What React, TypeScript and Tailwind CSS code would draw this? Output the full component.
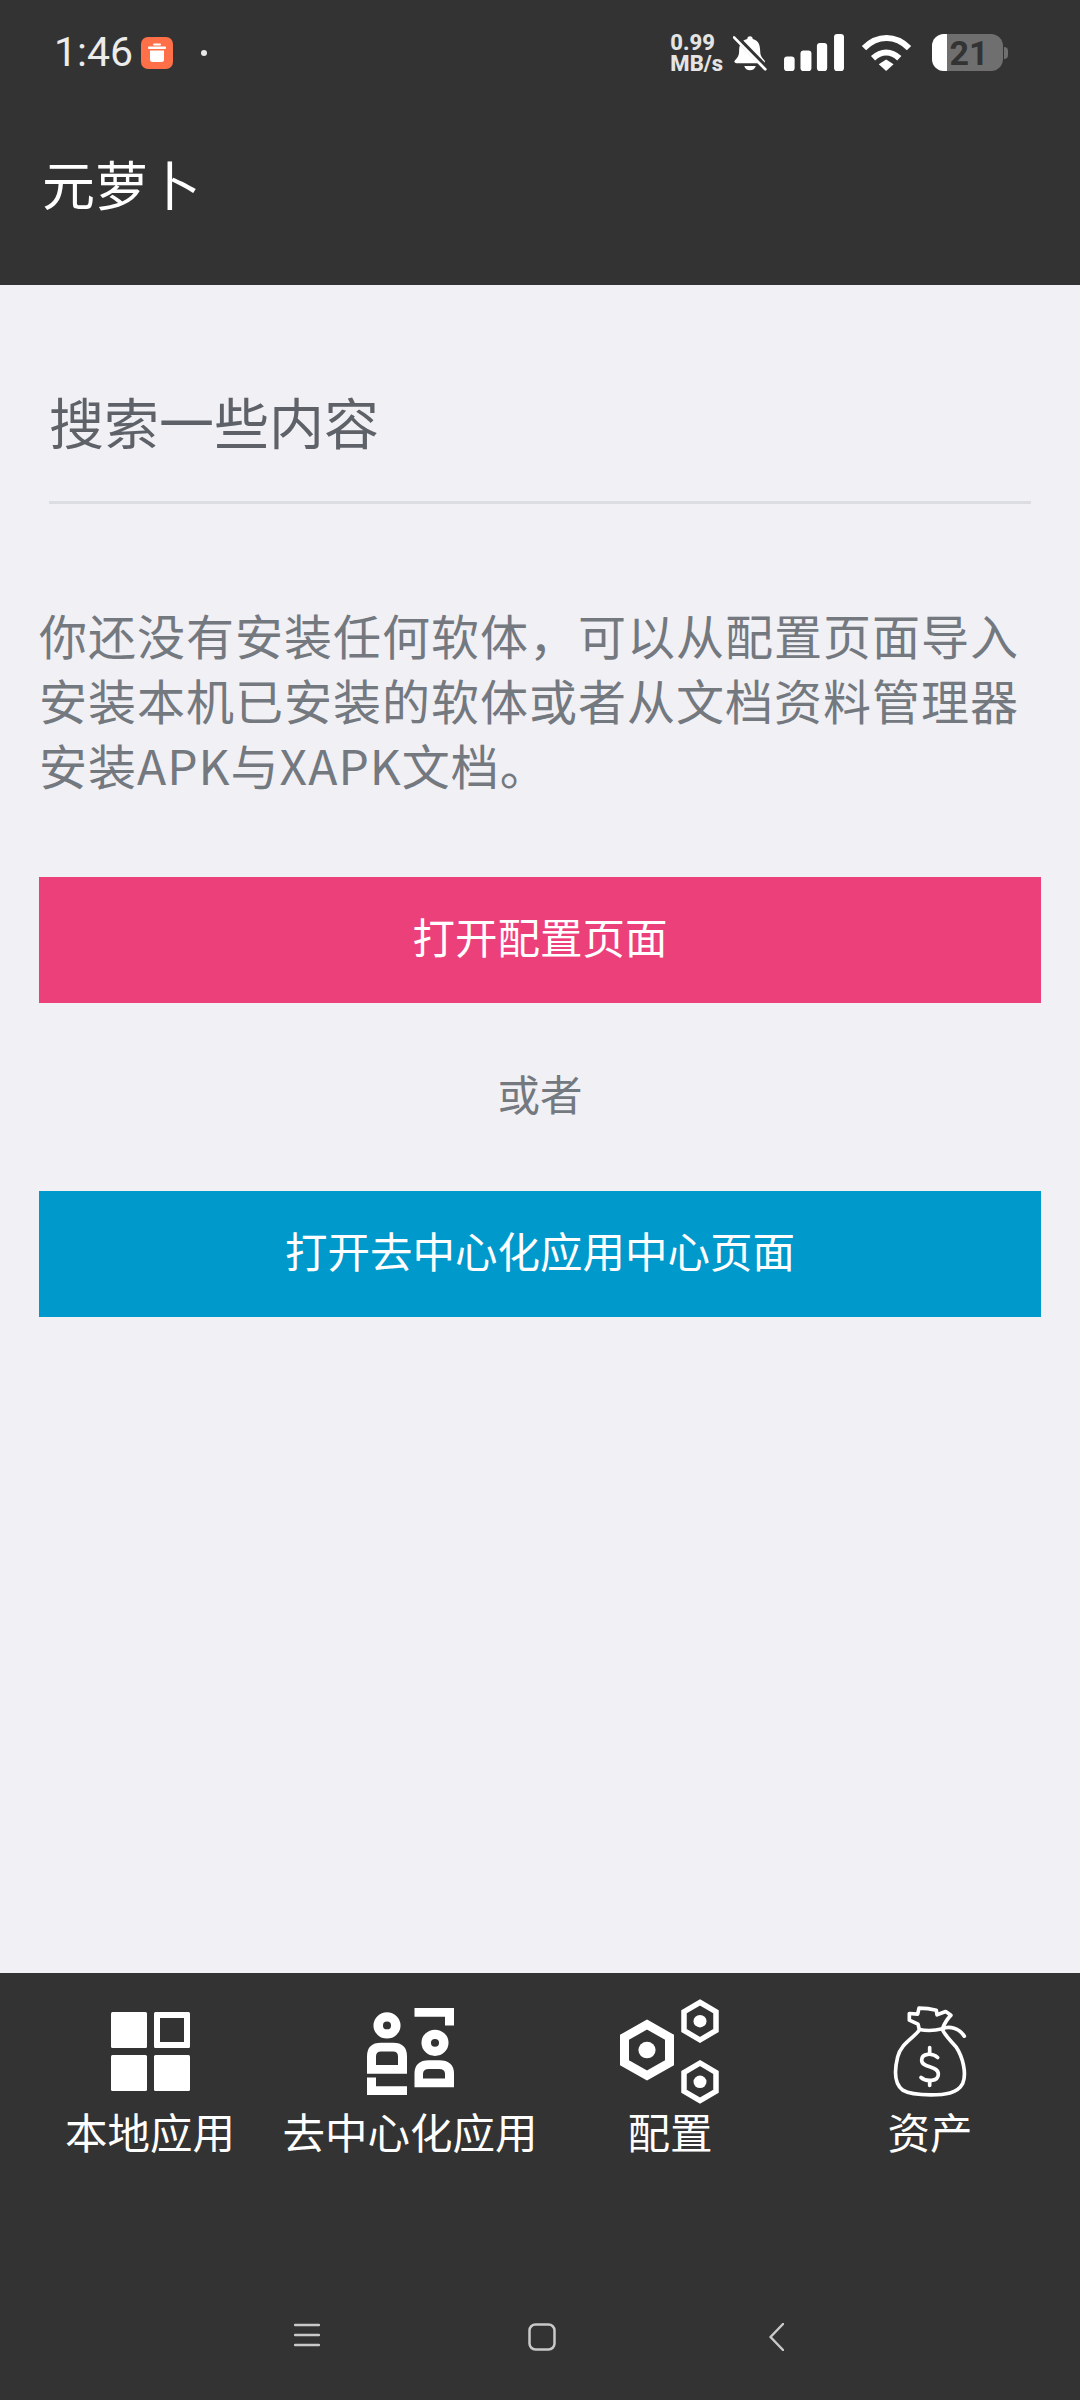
const CJK = "font-['Noto_Sans_CJK_SC','Noto_Sans',sans-serif]";

function hexPoints(cx: number, cy: number, w: number, h: number) {
  return [
    [cx, cy - h],
    [cx + w, cy - h / 2],
    [cx + w, cy + h / 2],
    [cx, cy + h],
    [cx - w, cy + h / 2],
    [cx - w, cy - h / 2],
  ]
    .map((p) => p.join(","))
    .join(" ");
}

function TrashBadge() {
  return (
    <span className="ml-[8px] flex h-8 w-8 items-center justify-center rounded-[7px] bg-[#ff7049]">
      <svg width="20" height="20" viewBox="0 0 20 20" fill="white">
        <rect x="6" y="0.5" width="8" height="2" rx="1" />
        <rect x="1" y="3.5" width="18" height="2.5" rx="1" />
        <path d="M3 7.5h14v9a2.5 2.5 0 0 1-2.5 2.5h-9A2.5 2.5 0 0 1 3 16.5z" />
      </svg>
    </span>
  );
}

function MutedBell() {
  return (
    <svg width="34" height="36" viewBox="285 100 100 106">
      <path
        fill="#fff"
        d="M335 104c5 0 8 3 8 8 18 4 22 20 22 36 0 12 4 18 12 26 4 4 2 9-3 9H295c-6 0-8-5-4-9 8-8 12-14 12-26 0-16 4-32 24-36 0-5 3-8 8-8zM318 191h34c-2 8-9 13-17 13s-15-5-17-13z"
      />
      <path d="M280 92l100 102" stroke="#333" strokeWidth="16" />
      <path d="M288 107l92 94" stroke="#fff" strokeWidth="8" strokeLinecap="round" />
    </svg>
  );
}

function SignalBars() {
  return (
    <svg width="60" height="37" viewBox="437 99 175 108" fill="#fff">
      <rect x="437" y="165" width="31" height="42" rx="9" />
      <rect x="485" y="147" width="32" height="60" rx="9" />
      <rect x="533" y="125" width="30" height="82" rx="9" />
      <rect x="583" y="99" width="29" height="108" rx="9" />
    </svg>
  );
}

function Wifi() {
  return (
    <svg width="51" height="37" viewBox="668 98 150 110" fill="none" stroke="#fff">
      <path d="M676 140c40-40 94-40 134 0" strokeWidth="18" />
      <path d="M703 170c24-23 54-23 78 0" strokeWidth="18" />
      <path d="M720 188l22-14 22 14-22 20z" fill="#fff" stroke="none" />
    </svg>
  );
}

function Battery() {
  return (
    <div className="flex items-center">
      <div className="relative flex h-[37px] w-[71px] items-center justify-center overflow-hidden rounded-[12px] bg-[#6f6f6f]">
        <div className="absolute inset-y-0 left-0 w-[15px] bg-white" />
        <span className="relative pl-[3px] font-['Roboto',sans-serif] text-[34px] leading-none font-bold text-[#333]">21</span>
      </div>
      <div className="ml-[1px] h-[12px] w-[4px] rounded-r-full bg-[#6f6f6f]" />
    </div>
  );
}

function StatusBar() {
  return (
    <div className="flex h-[104px] items-center pt-[1px] pr-[72px] pl-[54px] text-white">
      <span className="font-['Roboto',sans-serif] text-[41px] leading-none text-[#ececec]">1:46</span>
      <TrashBadge />
      <span className="ml-[28px] h-[6px] w-[6px] rounded-full bg-[#e8e8e8]" />
      <div className="ml-auto flex items-center">
        <div className="flex flex-col font-['Roboto',sans-serif] text-[22px] leading-[21px] font-extrabold text-[#e4e4e4]">
          <span>0.99</span>
          <span>MB/s</span>
        </div>
        <div className="ml-[10px]">
          <MutedBell />
        </div>
        <div className="ml-[17px]">
          <SignalBars />
        </div>
        <div className="ml-[17px]">
          <Wifi />
        </div>
        <div className="ml-[20px]">
          <Battery />
        </div>
      </div>
    </div>
  );
}

function GridIcon() {
  return (
    <svg width="79" height="79" viewBox="0 0 79 79" fill="#fff">
      <rect width="36" height="36" rx="1.5" />
      <path fillRule="evenodd" d="M43 1.5A1.5 1.5 0 0 1 44.500 0h33A1.500 1.500 0 0 1 79 1.500v33a1.500 1.500 0 0 1-1.500 1.500h-33A1.500 1.500 0 0 1 43 34.500zM49 6v24h24V6z" />
      <rect y="43" width="36" height="36" rx="1.500" />
      <rect x="43" y="43" width="36" height="36" rx="1.500" />
    </svg>
  );
}

function PeopleIcon() {
  return (
    <svg width="87" height="87" viewBox="0 0 87 90" preserveAspectRatio="none" fill="#fff">
      <circle cx="20" cy="18" r="8.800" fill="none" stroke="#fff" strokeWidth="9.500" />
      <circle cx="68" cy="36" r="8.800" fill="none" stroke="#fff" strokeWidth="9.500" />
      <path fillRule="evenodd" d="M0 68V50Q0 36 14 36H26Q40 36 40 50V68zM9 59H31V50Q31 45 26 45H14Q9 45 9 50z" />
      <path fillRule="evenodd" d="M47.500 82V68Q47.500 54 62 54H72Q87 54 87 68V82zM56 73H78V68Q78 63 72 63H62Q56 63 56 68z" />
      <path d="M0 72V90H40V81H9V72z" />
      <path d="M47.500 0H87V18H78V9H47.500z" />
    </svg>
  );
}

function HexIcon() {
  return (
    <svg width="100" height="105" viewBox="0 0 100 109" preserveAspectRatio="none" fill="#fff">
      <g fill="none" stroke="#fff">
        <polygon points={hexPoints(27, 53, 22.500, 26.500)} strokeWidth="9" />
        <polygon points={hexPoints(80, 23, 16, 19.500)} strokeWidth="5.500" />
        <polygon points={hexPoints(80, 86, 16, 19.500)} strokeWidth="5.500" />
      </g>
      <circle cx="27" cy="53" r="8.600" />
      <circle cx="80" cy="23" r="6.500" />
      <circle cx="80" cy="86" r="6.500" />
    </svg>
  );
}

function MoneyBagIcon() {
  return (
    <svg width="74" height="91" viewBox="36 18 222 272" fill="none" stroke="#fff" strokeWidth="11" strokeLinecap="round" strokeLinejoin="round">
      <path d="M85 40L110 42L114 24C130 24 150 26 166 30L168 44L194 34L210 45C200 55 192 66 184 86C160 92 135 92 115 88L111 72L85 60z" />
      <path d="M184 86C205 76 235 84 250 108" />
      <path d="M113 92C95 116 60 130 50 170C40 210 40 250 65 270C85 282 125 284 150 284C190 284 230 280 245 250C258 220 245 170 225 140C210 122 195 110 184 88" />
      <path d="M170 172C155 158 122 158 122 180C122 205 172 195 172 222C172 245 135 245 120 232" />
      <path d="M146 142V158M146 245V256" />
    </svg>
  );
}

const tabs = [
  { label: "本地应用", icon: <GridIcon /> },
  { label: "去中心化应用", icon: <PeopleIcon /> },
  { label: "配置", icon: <HexIcon /> },
  { label: "资产", icon: <MoneyBagIcon /> },
];

function TabBar() {
  return (
    <div className="grid grid-cols-4 px-5 pt-[23px]">
      {tabs.map((tab) => (
        <div key={tab.label} className="flex flex-col items-center">
          <div className="flex h-[110px] items-center justify-center">{tab.icon}</div>
          <span className="text-[42.500px] leading-[50px] whitespace-nowrap text-white">{tab.label}</span>
        </div>
      ))}
    </div>
  );
}

function NavKeys() {
  return (
    <div className="mt-auto flex h-[77px] items-start justify-center pr-[3px]">
      <svg width="26" height="24" viewBox="0 0 26 24" stroke="#c9c9c9" strokeWidth="2.500" strokeLinecap="round">
        <path d="M1 2h24M1 12h24M1 22h24" />
      </svg>
      <svg className="ml-[208px]" width="28" height="28" viewBox="0 0 28 28" fill="none" stroke="#c9c9c9" strokeWidth="2.500">
        <rect x="1.500" y="1.500" width="25" height="25" rx="6" />
      </svg>
      <svg className="ml-[213px]" width="15" height="28" viewBox="0 0 15 28" fill="none" stroke="#c9c9c9" strokeWidth="2.500" strokeLinecap="round" strokeLinejoin="round">
        <path d="M14 1L1.500 14L14 27" />
      </svg>
    </div>
  );
}

export default function App() {
  return (
    <div className={`flex h-[2400px] w-[1080px] flex-col bg-[#f0f0f5] ${CJK}`}>
      <header className="h-[285px] bg-[#333333]">
        <StatusBar />
        <h1 className="mt-[46px] pl-[42px] text-[53px] leading-[66px] font-normal text-white">元萝卜</h1>
      </header>

      <main className="flex-1 px-[39px]">
        <div className="mx-[10px] mt-[97px] border-b-[3px] border-[#dcdde3] pb-[43px] text-[55px] leading-[76px] text-[#5e6268]">
          搜索一些内容
        </div>
        <p className="mt-[98px] text-[48px] leading-[65px] tracking-[1px] text-[#74787f]">
          你还没有安装任何软体，可以从配置页面导入安装本机已安装的软体或者从文档资料管理器安装APK与XAPK文档。
        </p>
        <button className="mt-[80px] flex h-[126px] w-full items-center justify-center bg-[#ec407a] pb-[8px] text-[42.500px] text-white">
          打开配置页面
        </button>
        <div className="flex h-[188px] items-center justify-center pb-[8px] text-[42.500px] text-[#74787f]">或者</div>
        <button className="flex h-[126px] w-full items-center justify-center bg-[#0099cc] pb-[8px] text-[42.500px] text-white">
          打开去中心化应用中心页面
        </button>
      </main>

      <footer className="flex h-[427px] flex-col bg-[#333333]">
        <TabBar />
        <NavKeys />
      </footer>
    </div>
  );
}
